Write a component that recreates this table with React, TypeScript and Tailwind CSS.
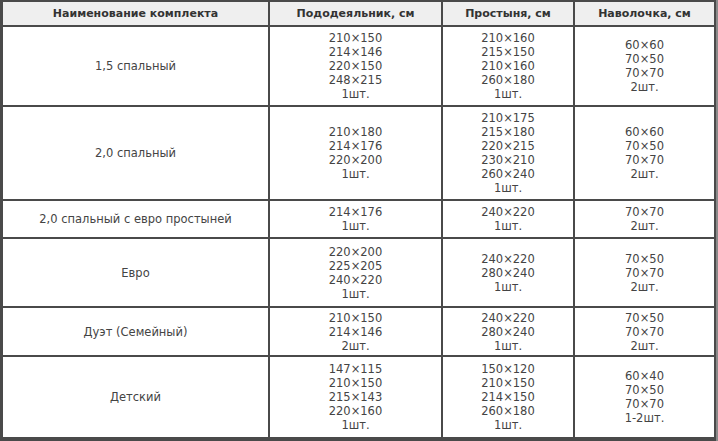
const rows: { name: string; cover: string[]; sheet: string[]; pillow: string[]; h: string }[] = [
  {
    name: '1,5 спальный',
    cover: ['210×150', '214×146', '220×150', '248×215', '1шт.'],
    sheet: ['210×160', '215×150', '210×160', '260×180', '1шт.'],
    pillow: ['60×60', '70×50', '70×70', '2шт.'],
    h: 'h-[80px]',
  },
  {
    name: '2,0 спальный',
    cover: ['210×180', '214×176', '220×200', '1шт.'],
    sheet: ['210×175', '215×180', '220×215', '230×210', '260×240', '1шт.'],
    pillow: ['60×60', '70×50', '70×70', '2шт.'],
    h: 'h-[94px]',
  },
  {
    name: '2,0 спальный с евро простыней',
    cover: ['214×176', '1шт.'],
    sheet: ['240×220', '1шт.'],
    pillow: ['70×70', '2шт.'],
    h: 'h-[38px]',
  },
  {
    name: 'Евро',
    cover: ['220×200', '225×205', '240×220', '1шт.'],
    sheet: ['240×220', '280×240', '1шт.'],
    pillow: ['70×50', '70×70', '2шт.'],
    h: 'h-[69px]',
  },
  {
    name: 'Дуэт (Семейный)',
    cover: ['210×150', '214×146', '2шт.'],
    sheet: ['240×220', '280×240', '1шт.'],
    pillow: ['70×50', '70×70', '2шт.'],
    h: 'h-[49px]',
  },
  {
    name: 'Детский',
    cover: ['147×115', '210×150', '215×143', '220×160', '1шт.'],
    sheet: ['150×120', '210×150', '214×150', '260×180', '1шт.'],
    pillow: ['60×40', '70×50', '70×70', '1-2шт.'],
    h: 'h-[81px]',
  },
];

function Lines({ items }: { items: string[] }) {
  return (
    <>
      {items.map((t, i) => (
        <div key={i}>{t}</div>
      ))}
    </>
  );
}

export default function App() {
  return (
    <div className="w-[718px] h-[441px] bg-[#8a8a8a] font-['DejaVu_Sans',sans-serif] text-[11.5px] leading-[14px] text-[#444]">
      <div className="w-[716px] border-l-[3px] border-t-2 border-b-4 border-r-2 border-[#4a4a4a] bg-white">
        <table className="w-full border-collapse table-fixed text-center">
          <colgroup>
            <col className="w-[266px]" />
            <col className="w-[173px]" />
            <col className="w-[132px]" />
            <col />
          </colgroup>
          <thead>
            <tr className="h-[24px] bg-[#efefef] text-[11px]">
              <th className="border-r-2 border-b-2 border-[#4a4a4a] font-bold text-[#333]">Наименование комплекта</th>
              <th className="border-r-2 border-b-2 border-[#4a4a4a] font-bold text-[#333]">Пододеяльник, см</th>
              <th className="border-r-2 border-b-2 border-[#4a4a4a] font-bold text-[#333]">Простыня, см</th>
              <th className="border-b-2 border-[#4a4a4a] font-bold text-[#333]">Наволочка, см</th>
            </tr>
          </thead>
          <tbody>
            {rows.map((r, i) => {
              const b = i < rows.length - 1 ? 'border-b-2' : '';
              return (
                <tr key={r.name} className={r.h}>
                  <td className={`border-r-2 ${b} border-[#4a4a4a] align-middle`}>{r.name}</td>
                  <td className={`border-r-2 ${b} border-[#4a4a4a] align-middle`}>
                    <Lines items={r.cover} />
                  </td>
                  <td className={`border-r-2 ${b} border-[#4a4a4a] align-middle`}>
                    <Lines items={r.sheet} />
                  </td>
                  <td className={`${b} border-[#4a4a4a] align-middle`}>
                    <Lines items={r.pillow} />
                  </td>
                </tr>
              );
            })}
          </tbody>
        </table>
      </div>
    </div>
  );
}
